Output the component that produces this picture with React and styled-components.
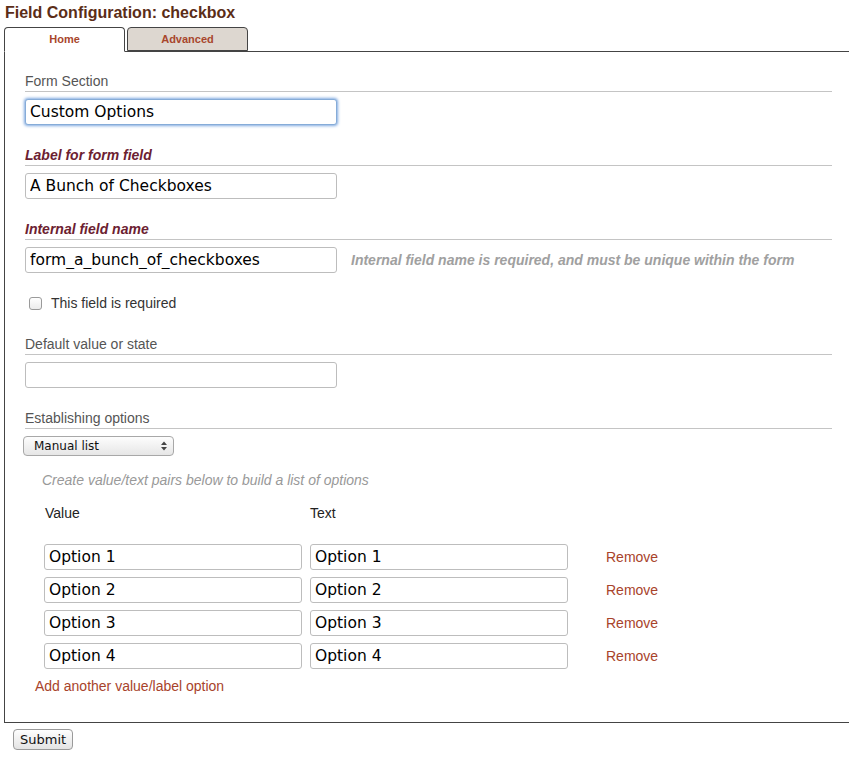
import styled, { createGlobalStyle } from "styled-components"

const GlobalStyle = createGlobalStyle`
  html, body {
    margin: 0;
    padding: 0;
    background: #fff;
    overflow: hidden;
  }
  body {
    font-family: "Liberation Sans", Arial, sans-serif;
    color: #333;
  }
`

const Page = styled.div`
  padding: 0 0 0 4px;
  width: 860px;
`

const Title = styled.h1`
  margin: 0 0 2px 1px;
  height: 25px;
  font-size: 16px;
  line-height: 25px;
  font-weight: bold;
  color: #5b2d17;
`

const Tabs = styled.div`
  display: flex;
  align-items: flex-end;
  gap: 2px;
  position: relative;
  z-index: 1;
`

const Tab = styled.div`
  box-sizing: border-box;
  width: 121px;
  height: ${({ active }) => (active ? "25px" : "24px")};
  margin-bottom: ${({ active }) => (active ? "-1px" : "0")};
  border: 1px solid #444;
  border-bottom-color: ${({ active }) => (active ? "#fff" : "#444")};
  border-radius: 4px 4px 0 0;
  background: ${({ active }) => (active ? "#fff" : "#ddd7d0")};
  color: #a8462c;
  font-size: 11px;
  font-weight: bold;
  text-align: center;
  line-height: 22px;
`

const Panel = styled.div`
  box-sizing: border-box;
  width: 850px;
  border: 1px solid #444;
  padding: 21px 21px 28px 20px;
`

const Section = styled.div`
  margin-bottom: 22px;
`

const SectionTitle = styled.div`
  font-size: 14px;
  line-height: 16px;
  padding-bottom: 2px;
  border-bottom: 1px solid #c4c4c4;
  margin-bottom: 7px;
  color: ${({ required }) => (required ? "#6c2131" : "#555")};
  font-weight: ${({ required }) => (required ? "bold" : "normal")};
  font-style: ${({ required }) => (required ? "italic" : "normal")};
`

const FieldRow = styled.div`
  display: flex;
  align-items: center;
  gap: 14px;
`

const TextInput = styled.input`
  box-sizing: border-box;
  width: ${({ width }) => width || "312px"};
  height: 26px;
  margin: 0;
  padding: 0 4px;
  border: 1px solid ${({ focused }) => (focused ? "#86acd8" : "#bdbdbd")};
  border-radius: 3px;
  box-shadow: ${({ focused }) => (focused ? "0 0 3px 1px #7fa9e0" : "none")};
  font-family: "DejaVu Sans", Verdana, sans-serif;
  font-size: 15.5px;
  color: #000;
  background: #fff;
  outline: none;
`

const Hint = styled.span`
  font-size: 14px;
  font-weight: bold;
  font-style: italic;
  color: #a0a0a0;
`

const CheckRow = styled.label`
  display: flex;
  align-items: center;
  gap: 9px;
  height: 16px;
  margin: 0 0 25px 4px;
  font-size: 14px;
  color: #333;
`

const Box = styled.span`
  box-sizing: border-box;
  width: 13px;
  height: 13px;
  border: 1px solid #9a9a9a;
  border-radius: 3px;
  background: linear-gradient(#fff, #ececec);
`

const Select = styled.div`
  box-sizing: border-box;
  width: 151px;
  height: 20px;
  margin-left: -2px;
  padding: 0 6px 0 10px;
  display: flex;
  align-items: center;
  justify-content: space-between;
  border: 1px solid #a8a8a8;
  border-radius: 4px;
  background: linear-gradient(#fdfdfd, #e6e6e6);
  font-family: "DejaVu Sans", Verdana, sans-serif;
  font-size: 12px;
  color: #111;
`

const Options = styled.div`
  padding: 16px 0 0 17px;
`

const OptionsHint = styled.div`
  font-size: 14px;
  font-style: italic;
  color: #999;
  line-height: 16px;
`

const ColumnHeads = styled.div`
  display: flex;
  margin: 17px 0 23px 3px;
  font-size: 14px;
  line-height: 16px;
  color: #222;
`

const ColumnHead = styled.span`
  width: ${({ width }) => width};
`

const OptionList = styled.div`
  display: flex;
  flex-direction: column;
  gap: 7px;
  padding-left: 2px;
`

const OptionRow = styled.div`
  display: flex;
  align-items: center;
  gap: 8px;
`

const Link = styled.a`
  color: #a8432b;
  font-size: 14px;
  text-decoration: none;
  cursor: pointer;
  margin-left: ${({ offset }) => offset || "0"};
`

const AddLink = styled(Link)`
  display: block;
  margin: 9px 0 0 -7px;
  line-height: 16px;
`

const SubmitButton = styled.button`
  margin: 6px 0 0 9px;
  height: 21px;
  padding: 0 6px;
  border: 1px solid #9a9a9a;
  border-radius: 4px;
  background: linear-gradient(#fefefe, #e3e3e3);
  font-family: "DejaVu Sans", Verdana, sans-serif;
  font-size: 13px;
  color: #111;
`

const Arrows = () => (
  <svg width="6" height="10" viewBox="0 0 6 10">
    <path d="M0 4 L3 0.5 L6 4 Z" fill="#444" />
    <path d="M0 6 L3 9.5 L6 6 Z" fill="#444" />
  </svg>
)

const options = ["Option 1", "Option 2", "Option 3", "Option 4"]

const App = () => {
  return <>
    <GlobalStyle />
    <Page>
      <Title>Field Configuration: checkbox</Title>
      <Tabs>
        <Tab active>Home</Tab>
        <Tab>Advanced</Tab>
      </Tabs>
      <Panel>
        <Section>
          <SectionTitle>Form Section</SectionTitle>
          <TextInput focused defaultValue="Custom Options" />
        </Section>
        <Section>
          <SectionTitle required>Label for form field</SectionTitle>
          <TextInput defaultValue="A Bunch of Checkboxes" />
        </Section>
        <Section>
          <SectionTitle required>Internal field name</SectionTitle>
          <FieldRow>
            <TextInput defaultValue="form_a_bunch_of_checkboxes" />
            <Hint>Internal field name is required, and must be unique within the form</Hint>
          </FieldRow>
        </Section>
        <CheckRow>
          <Box />
          This field is required
        </CheckRow>
        <Section>
          <SectionTitle>Default value or state</SectionTitle>
          <TextInput defaultValue="" />
        </Section>
        <div>
          <SectionTitle>Establishing options</SectionTitle>
          <Select>
            <span>Manual list</span>
            <Arrows />
          </Select>
          <Options>
            <OptionsHint>Create value/text pairs below to build a list of options</OptionsHint>
            <ColumnHeads>
              <ColumnHead width="265px">Value</ColumnHead>
              <ColumnHead>Text</ColumnHead>
            </ColumnHeads>
            <OptionList>
              {options.map((o) => (
                <OptionRow key={o}>
                  <TextInput width="258px" defaultValue={o} />
                  <TextInput width="258px" defaultValue={o} />
                  <Link offset="30px">Remove</Link>
                </OptionRow>
              ))}
            </OptionList>
            <AddLink>Add another value/label option</AddLink>
          </Options>
        </div>
      </Panel>
      <SubmitButton>Submit</SubmitButton>
    </Page>
  </>
}

export default App
